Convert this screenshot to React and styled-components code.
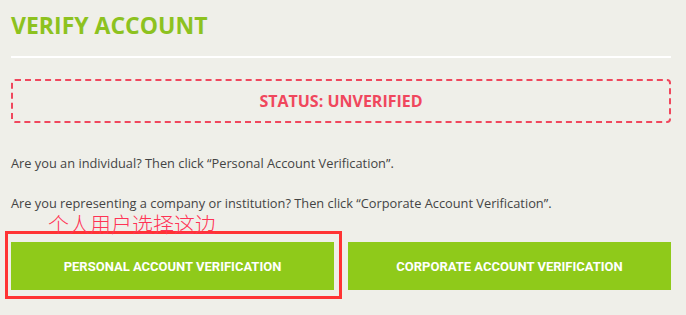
import React from "react";
import styled, { createGlobalStyle } from "styled-components";

const Global = createGlobalStyle`
  html, body { margin: 0; padding: 0; background: #efefe9; }
  body { font-family: "Open Sans", "Liberation Sans", sans-serif; }
`;

const Page = styled.div`
  width: 686px;
  height: 315px;
  box-sizing: border-box;
  padding: 0 15px 0 11px;
  overflow: hidden;
`;

const Title = styled.h1`
  margin: 0;
  padding-top: 10px;
  font-size: 23px;
  line-height: 30px;
  font-weight: 700;
  color: #8dc21f;
`;

const Divider = styled.div`
  height: 2px;
  background: #ffffff;
  margin-top: 16px;
`;

const StatusBox = styled.div`
  margin-top: 21px;
  height: 44px;
  box-sizing: border-box;
  border: 2px dashed #f0475d;
  border-radius: 4px;
  display: flex;
  align-items: center;
  justify-content: center;
  color: #f0475d;
  font-weight: 700;
  font-size: 16px;
`;

const Text = styled.p`
  margin: ${(p) => p.$top}px 0 0;
  font-size: 12.8px;
  line-height: 18px;
  color: #444444;
`;

const Actions = styled.div`
  position: relative;
  margin-top: 30px;
  display: flex;
  gap: 14px;
`;

const Button = styled.button`
  flex: 1;
  height: 48px;
  border: 0;
  background: #8fca1a;
  color: #ffffff;
  font-family: Roboto, "Liberation Sans", sans-serif;
  font-weight: 700;
  font-size: 13px;
  text-transform: uppercase;
  cursor: pointer;
`;

const Highlight = styled.div`
  position: absolute;
  left: -6px;
  top: -11px;
  width: 337px;
  height: 68px;
  box-sizing: border-box;
  border: 3px solid #ff3333;
  pointer-events: none;
`;

const Note = styled.span`
  position: absolute;
  left: 37px;
  top: -29px;
  font-family: "Noto Sans CJK SC", sans-serif;
  font-weight: 300;
  font-size: 21px;
  line-height: 21px;
  color: #ff3355;
  white-space: nowrap;
`;

export default function App() {
  return (
    <>
      <Global />
      <Page>
        <Title>VERIFY ACCOUNT</Title>
        <Divider />
        <StatusBox>STATUS: UNVERIFIED</StatusBox>
        <Text $top={31}>Are you an individual? Then click “Personal Account Verification”.</Text>
        <Text $top={22}>
          Are you representing a company or institution? Then click “Corporate Account Verification”.
        </Text>
        <Actions>
          <Button>Personal Account Verification</Button>
          <Button>Corporate Account Verification</Button>
          <Highlight />
          <Note>个人用户选择这边</Note>
        </Actions>
      </Page>
    </>
  );
}
